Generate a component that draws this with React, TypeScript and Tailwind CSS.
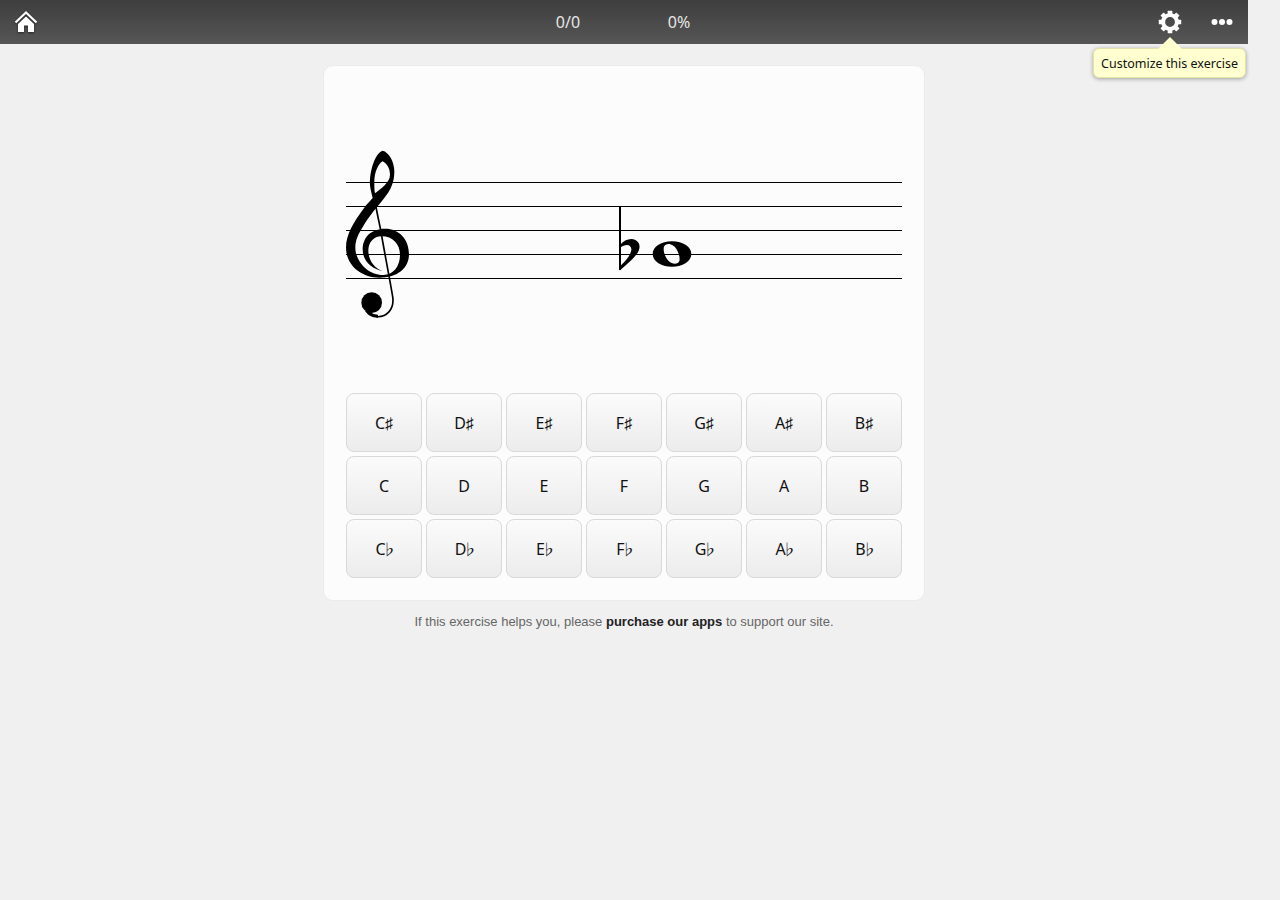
const ubuntuish = "font-['Noto_Sans',sans-serif]";

const letters = ["C", "D", "E", "F", "G", "A", "B"];

function HomeIcon() {
  return (
    <svg width="24" height="24" viewBox="0 0 24 24" className="drop-shadow-[0_1px_1px_rgba(0,0,0,0.5)]">
      <path d="M1.5 12.5 L12 2.5 L22.5 12.5" fill="none" stroke="#fff" strokeWidth="2.2" />
      <path fill="#fff" d="M12 6.5 L20 14 V22 H14 V15.5 H10 V22 H4 V14 Z" />
    </svg>
  );
}

function GearIcon() {
  return (
    <svg width="24" height="24" viewBox="0 0 24 24">
      <circle cx="12" cy="12" r="6.9" fill="none" stroke="#fff" strokeWidth="4" />
      {[0, 45, 90, 135, 180, 225, 270, 315].map((a) => (
        <rect key={a} x="9.7" y="0.8" width="4.6" height="5" rx="0.5" fill="#fff" transform={`rotate(${a} 12 12)`} />
      ))}
    </svg>
  );
}

function DotsIcon() {
  return (
    <svg width="22" height="8" viewBox="0 0 22 8">
      <circle cx="3.5" cy="4" r="3" fill="#fff" />
      <circle cx="11" cy="4" r="3" fill="#fff" />
      <circle cx="18.5" cy="4" r="3" fill="#fff" />
    </svg>
  );
}

function TrebleClef() {
  return (
    <svg width="90" height="190" viewBox="0 0 270 570" className="absolute left-[-10px] top-[-42px]">
      {/* body, the upper loop is cut out */}
      <path
        fill="#000"
        fillRule="evenodd"
        d="M140 32 C158 36 176 66 175 96 C175 125 165 150 142 178 C120 205 95 235 82 258 C68 280 58 300 58 323 C58 360 92 405 142 405 C172 405 192 378 192 345 C192 312 170 289 137 289 C112 289 97 308 97 333 C97 360 115 385 140 393 C110 388 80 365 80 328 C80 292 105 266 147 266 C190 266 219 298 219 343 C219 385 185 413 130 413 C75 413 30 375 30 323 C30 285 50 250 88 199 C97 188 104 181 110 174 C104 150 100 135 102 118 C105 80 120 38 140 32 Z M140 64 C128 70 115 95 115 125 C115 140 115 150 117 160 C135 145 162 128 162 104 C162 85 152 70 140 64 Z"
      />
      {/* stem and tail */}
      <path
        fill="none"
        stroke="#000"
        strokeWidth="5"
        d="M115 174 C122 215 128 240 134 270 C145 335 160 410 170 470 C176 510 150 532 122 530"
      />
      <path fill="#000" d="M87 513 C97 528 112 534 126 533 L126 524 C112 524 104 518 100 510 Z" />
      <circle cx="107" cy="488" r="31" fill="#000" />
    </svg>
  );
}

function FlatNote() {
  return (
    <svg width="110" height="90" viewBox="0 0 330 270" className="absolute left-[254px] top-[13px]">
      <path d="M60 35 V225" stroke="#000" strokeWidth="6" fill="none" />
      <path
        fill="#000"
        d="M60 150 C72 135 92 128 106 135 C122 143 123 162 108 180 C94 197 76 212 60 226 L60 214 C76 198 90 184 94 166 C96 150 80 143 60 158 Z"
      />
      <path
        fillRule="evenodd"
        fill="#000"
        d="M216 139 C250 139 274 156 274 177 C274 198 250 215 216 215 C182 215 158 198 158 177 C158 156 182 139 216 139 Z M196 150 C186 156 192 184 206 198 C218 209 234 208 238 198 C242 186 232 160 220 152 C210 145 202 146 196 150 Z"
      />
    </svg>
  );
}

function NoteButton({ children }: { children: React.ReactNode }) {
  return (
    <button className="h-[59px] w-[76px] rounded-lg border border-[#d9d9d9] bg-gradient-to-b from-[#fbfbfb] to-[#ececec] text-base text-[#111]">
      {children}
    </button>
  );
}

export default function App() {
  return (
    <div className="min-h-[900px] bg-[#f0f0f0] font-['Liberation_Sans',sans-serif]">
      <div className="w-[1248px]">
        <header className={`relative flex h-11 items-center bg-gradient-to-b from-[#3e3e3e] to-[#565656] ${ubuntuish}`}>
          <div className="flex flex-1 pl-[14px]">
            <HomeIcon />
          </div>
          <div className="flex text-base text-[#e6e6e6]">
            <span className="w-[111px] text-center">0/0</span>
            <span className="w-[111px] text-center">0%</span>
          </div>
          <div className="flex flex-1 items-center justify-end gap-[29px] pr-[15px]">
            <GearIcon />
            <DotsIcon />
          </div>
          <div className="absolute left-[1093px] top-[48px] z-10 h-[30px] w-[153px] rounded-[6px] border border-[#e4e4a8] bg-[#ffffcf] text-center text-[12.5px] leading-[30px] text-[#111] shadow-[0_1px_4px_rgba(0,0,0,0.35)]">
            Customize this exercise
            <div className="absolute left-[64px] top-[-12px] h-3 w-6 bg-[#ffffcf] [clip-path:polygon(50%_0,100%_100%,0_100%)]" />
          </div>
        </header>

        <main className="flex flex-col items-center pt-[21px]">
          <section className="w-[602px] rounded-[10px] border border-[#ebebeb] bg-[#fcfcfc] px-[22px] pb-[22px] pt-[116px]">
            <div className="relative flex flex-col gap-[23px]">
              <div className="h-px bg-black" />
              <div className="h-px bg-black" />
              <div className="h-px bg-black" />
              <div className="h-px bg-black" />
              <div className="h-px bg-black" />
              <TrebleClef />
              <FlatNote />
            </div>
            <div className={`mt-[114px] flex flex-col gap-1 ${ubuntuish}`}>
              <div className="flex gap-1">
                {letters.map((l) => (
                  <NoteButton key={l}>{l}♯</NoteButton>
                ))}
              </div>
              <div className="flex gap-1">
                {letters.map((l) => (
                  <NoteButton key={l}>{l}</NoteButton>
                ))}
              </div>
              <div className="flex gap-1">
                {letters.map((l) => (
                  <NoteButton key={l}>
                    <span className="tracking-[-4px]">{l}</span>
                    <span className="font-['Noto_Sans_CJK_JP',sans-serif] text-[15px] tracking-[-4px]">♭</span>
                  </NoteButton>
                ))}
              </div>
            </div>
          </section>
          <p className="mt-3 text-[13px] leading-[17px] text-[#666]">
            If this exercise helps you, please <b className="text-[#222]">purchase our apps</b> to support our site.
          </p>
        </main>
      </div>
    </div>
  );
}
